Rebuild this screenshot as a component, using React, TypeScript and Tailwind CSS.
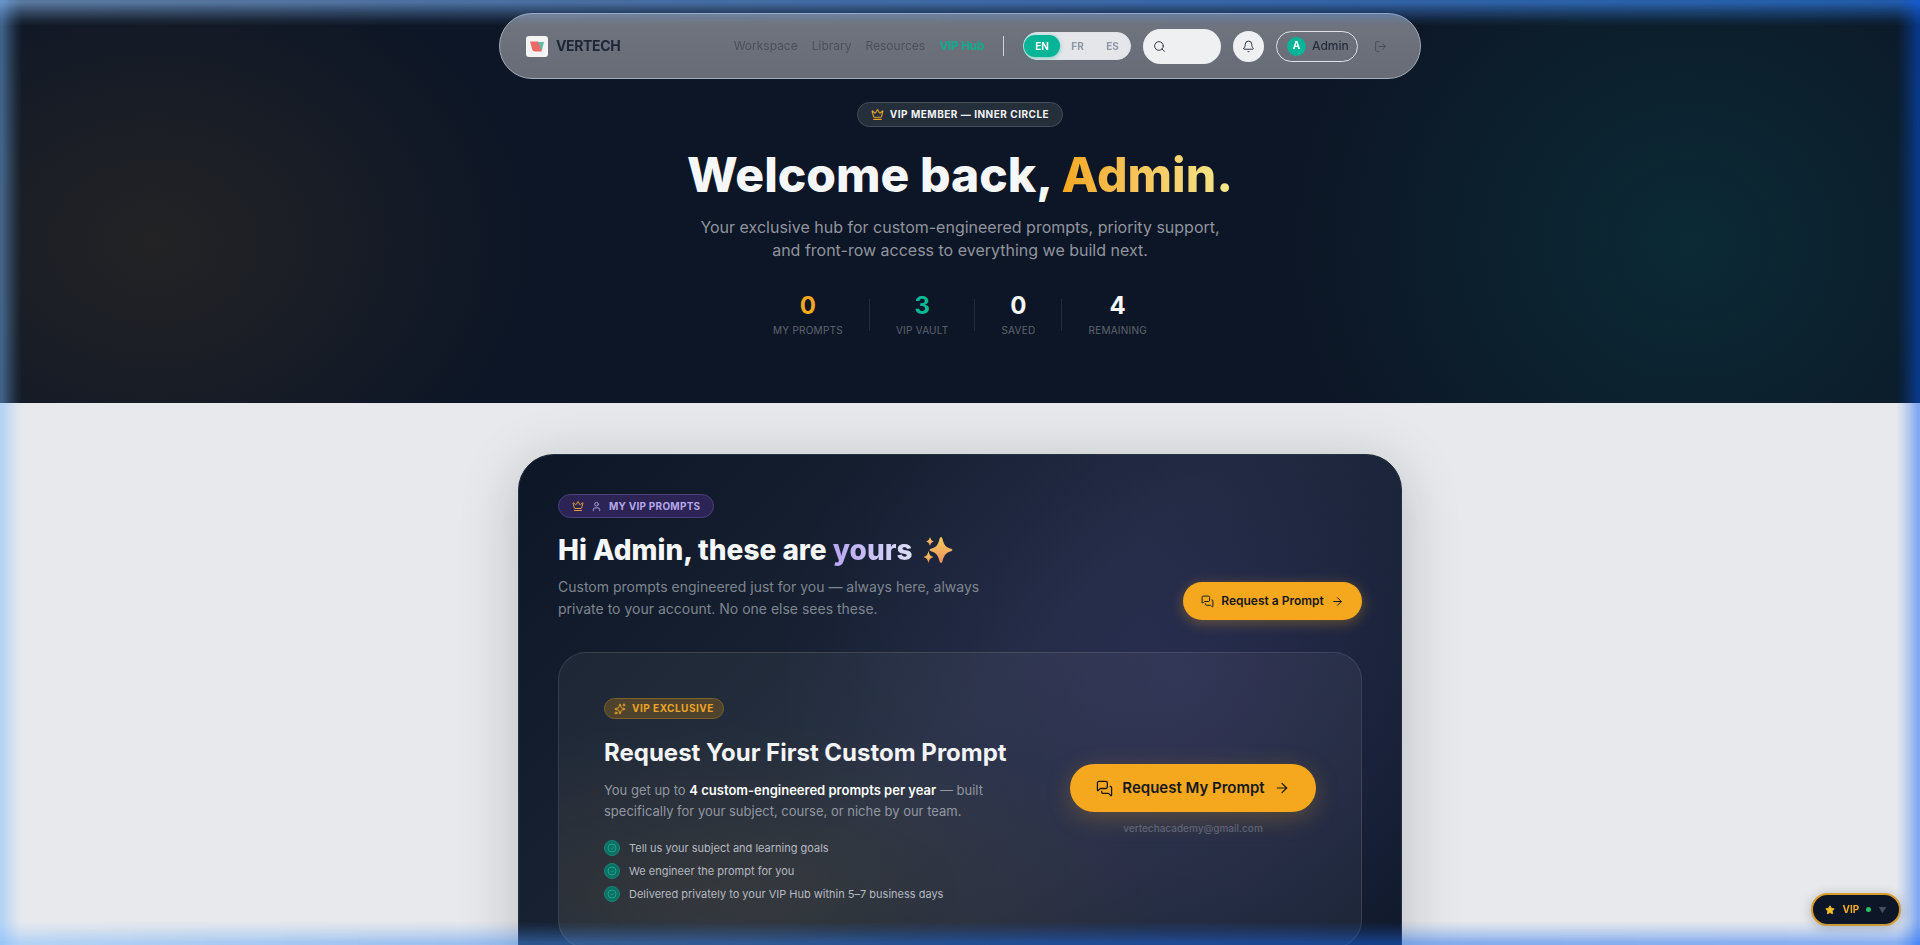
import React from 'react';
import { Crown, User, Search, Bell, LogOut, ArrowRight, MessagesSquare, Sparkles, Star } from 'lucide-react';

const navLinks = ['Workspace', 'Library', 'Resources'];
const languages = ['EN', 'FR', 'ES'];

const stats = [
    { value: 0, label: 'My Prompts', color: 'text-[#f5a81e]' },
    { value: 3, label: 'VIP Vault', color: 'text-[#06b795]' },
    { value: 0, label: 'Saved', color: 'text-[#f6f7f9]' },
    { value: 4, label: 'Remaining', color: 'text-[#f6f7f9]' },
];

const steps = [
    'Tell us your subject and learning goals',
    'We engineer the prompt for you',
    'Delivered privately to your VIP Hub within 5–7 business days',
];

const Logo: React.FC = () => (
    <svg width="22" height="21" viewBox="0 0 22 21" aria-hidden="true">
        <rect width="22" height="21" rx="3" fill="#f4f4f5" />
        <path d="M12 6h6l-2 8h-3z" fill="#5dbfa6" />
        <path d="M4 5.500h8l4 10H9q-2 0-2.800-2z" fill="#ee6a68" />
    </svg>
);

const StepIcon: React.FC = () => (
    <svg width="16" height="16" viewBox="0 0 16 16" fill="none" className="shrink-0" aria-hidden="true">
        <circle cx="8" cy="8" r="7.5" fill="#0e6f65" stroke="#12887a" />
        <circle cx="8" cy="8" r="4" stroke="#16a58d" />
        <path d="M6.7 8.1l1 .9 1.7-1.9" stroke="#16a58d" />
    </svg>
);

const SparkleMark: React.FC = () => (
    <svg width="30" height="28" viewBox="0 0 30 28" aria-hidden="true">
        <defs>
            <linearGradient id="sparkle" x1="0" y1="0" x2="0" y2="1">
                <stop offset="0" stopColor="#f5cf57" />
                <stop offset="1" stopColor="#f08f63" />
            </linearGradient>
        </defs>
        <g fill="url(#sparkle)">
            <path d="M18 1q1 0 1.5 2c1.500 6 3 8 8 9.500q2 .6 2 1.500t-2 1.500c-5 1.500-6.500 4-8 9.500q-.5 2-1.500 2t-1.500-2c-1.500-5.500-3-8-8-9.500q-2-.6-2-1.500t2-1.500c5-1.500 6.500-3.500 8-9.500q.5-2 1.500-2z" />
            <path d="M7 1c1 3 1.500 3.500 4 4.500-2.500 1-3 1.500-4 4.500-1-3-1.500-3.500-4-4.500 2.500-1 3-1.500 4-4.500z" />
            <path d="M5.500 15c1 4 2 5 5 6-3 1-4 2-5 6-1-4-2-5-5-6 3-1 4-2 5-6z" />
        </g>
    </svg>
);

const Header: React.FC = () => (
    <header className="fixed inset-x-0 top-[13px] z-20 mx-auto flex h-[66px] w-full max-w-[922px] items-center rounded-full border border-[#a3acba] bg-gradient-to-b from-[#70757f] to-[#676b76] pr-[30px] pl-[26px]">
        <a href="#home" className="flex items-center gap-2 text-sm font-bold tracking-tight text-[#1e2635]">
            <Logo />
            VERTECH
        </a>
        <nav className="ml-auto flex items-center gap-[14px] text-xs text-[#4b515c]">
            {navLinks.map(link => (
                <a key={link} href={`#${link.toLowerCase()}`}>{link}</a>
            ))}
            <a href="#vip" className="font-bold tracking-tight text-[#0fae90]">VIP Hub</a>
        </nav>
        <div className="mx-[19px] h-5 w-px bg-[#cdd1d8]" />
        <div className="flex h-7 w-[108px] items-center rounded-full border border-[#dfe3e8] bg-[#e4e6ea] text-[10px] font-bold text-[#8f97a5]">
            {languages.map((lang, index) => (
                <button
                    key={lang}
                    type="button"
                    className={index === 0
                        ? 'h-[22px] w-9 rounded-full bg-[#06b497] text-white shadow-[0_1px_4px_#06b49780]'
                        : 'h-[22px] flex-1'}
                >
                    {lang}
                </button>
            ))}
        </div>
        <label className="ml-3 flex h-[35px] w-[78px] items-center rounded-full bg-[#eef0f2] pl-[10px] text-[#2d3440]">
            <Search size={13} strokeWidth={1.8} className="shrink-0" />
            <input type="search" aria-label="Search" className="w-full min-w-0 bg-transparent px-2 text-xs outline-none" />
        </label>
        <button type="button" aria-label="Notifications" className="ml-3 flex size-[31px] items-center justify-center rounded-full bg-[#eef0f2] text-[#2d3440]">
            <Bell size={13} strokeWidth={1.8} />
        </button>
        <button type="button" className="ml-3 flex h-[31px] w-[82px] items-center gap-[6px] rounded-full border border-[#dfe3e8] pl-[10px] text-xs font-medium text-[#272e3c]">
            <span className="flex size-[19px] items-center justify-center rounded-full bg-[#06b497] text-[10px] font-bold text-white">A</span>
            Admin
        </button>
        <button type="button" aria-label="Log out" className="ml-3 flex size-5 items-center justify-center text-[#454c59]">
            <LogOut size={13} strokeWidth={1.8} />
        </button>
    </header>
);

const Hero: React.FC = () => (
    <section className="bg-[#0d1626] bg-[radial-gradient(ellipse_380px_300px_at_8%_60%,#232325,#23232500),radial-gradient(ellipse_400px_380px_at_88%_60%,#0b2a35,#0b2a3500)] pt-[102px] pb-[72px] text-center">
        <div className="flex flex-col items-center">
            <span className="flex h-[25px] items-center gap-[6px] rounded-full border border-[#454d5a] bg-[#252e3b] px-[13px] text-[10px] font-bold tracking-wider text-[#f1f3f6]">
                <Crown size={13} className="text-[#e5a02a]" />
                VIP MEMBER — INNER CIRCLE
            </span>
            <h1 className="mt-5 text-5xl leading-[56px] font-extrabold text-[#f6f7f9]">
                Welcome back, <span className="bg-gradient-to-r from-[#f5a81e] to-[#f3e88c] bg-clip-text text-transparent">Admin.</span>
            </h1>
            <p className="mt-[13px] w-[530px] max-w-full text-base leading-[23px] text-[#8f949e]">
                Your exclusive hub for custom-engineered prompts, priority support, and front-row access to everything we build next.
            </p>
            <dl className="mt-[37px] flex items-center divide-x divide-[#232b39]">
                {stats.map(stat => (
                    <div key={stat.label} className="flex h-8 flex-col-reverse items-center justify-center px-[26px]">
                        <dt className="mt-[2px] text-[10px] leading-4 tracking-wide text-[#5e6470] uppercase">{stat.label}</dt>
                        <dd className={`text-2xl leading-7 font-bold ${stat.color}`}>{stat.value}</dd>
                    </div>
                ))}
            </dl>
        </div>
    </section>
);

const RequestCard: React.FC = () => (
    <div className="mt-8 flex items-center justify-between rounded-[28px] border border-white/10 bg-white/5 bg-[radial-gradient(ellipse_at_20%_80%,#f5a81e14,transparent_50%)] p-[45px]">
        <div className="w-[410px]">
            <span className="flex h-[21px] w-fit items-center gap-[6px] rounded-full border border-[#7d6129] bg-[#4f432d] px-[9px] text-[10px] font-bold tracking-wider text-[#eca424]">
                <Sparkles size={12} />
                VIP EXCLUSIVE
            </span>
            <h3 className="mt-[18px] text-2xl leading-8 font-bold whitespace-nowrap text-[#f3f4f7]">Request Your First Custom Prompt</h3>
            <p className="mt-[11px] text-[13px] leading-[21px] text-[#9297a1]">
                You get up to <strong className="font-semibold text-white">4 custom-engineered prompts per year</strong> — built
                <br />
                specifically for your subject, course, or niche by our team.
            </p>
            <ul className="mt-[18px] flex flex-col gap-[7px] text-[11px] leading-4 text-[#b5b9c1]">
                {steps.map(step => (
                    <li key={step} className="flex items-center gap-[9px]">
                        <StepIcon />
                        {step}
                    </li>
                ))}
            </ul>
        </div>
        <div className="flex flex-col items-center">
            <button type="button" className="flex h-12 w-[246px] items-center justify-center gap-[9px] rounded-full bg-[#f5a81e] text-[15px] font-semibold text-[#14171c] shadow-[0_6px_24px_#f5a81e40]">
                <MessagesSquare size={17} strokeWidth={1.8} />
                Request My Prompt
                <ArrowRight size={16} strokeWidth={1.8} />
            </button>
            <a href="mailto:vertechacademy@gmail.com" className="mt-2 text-[10px] leading-4 font-medium text-[#5f6375]">vertechacademy@gmail.com</a>
        </div>
    </div>
);

const VipPrompts: React.FC = () => (
    <section className="mx-auto w-full max-w-[884px] rounded-[36px] border border-[#263040] bg-[#0d1626] bg-[radial-gradient(circle_at_75%_42%,#8b6cf624_0,#8b6cf600_400px),linear-gradient(135deg,#0d1626,#1b2637_50%,#0d1626)] p-[39px] shadow-[0_10px_60px_#00000033]">
        <div className="flex items-end justify-between">
            <div>
                <span className="flex h-6 w-fit items-center gap-[7px] rounded-full border border-[#4b3f7c] bg-[#2b2455] px-[13px] text-[10px] font-bold tracking-wide text-[#b6a7ec]">
                    <Crown size={12} className="text-[#dd9a35]" />
                    <User size={11} />
                    MY VIP PROMPTS
                </span>
                <h2 className="mt-[14px] flex items-center gap-[10px] text-[28px] leading-9 font-extrabold text-[#f6f7f9]">
                    <span>Hi Admin, these are <span className="bg-gradient-to-r from-[#b9a5f3] to-[#dcdff6] bg-clip-text text-transparent">yours</span></span>
                    <SparkleMark />
                </h2>
                <p className="mt-2 w-[440px] text-sm leading-[22px] text-[#7e858f]">
                    Custom prompts engineered just for you — always here, always private to your account. No one else sees these.
                </p>
            </div>
            <button type="button" className="flex h-[38px] w-[179px] items-center justify-center gap-[7px] rounded-full bg-[#f5a81e] text-xs font-semibold text-[#14171c] shadow-[0_3px_14px_#f5a81e55]">
                <MessagesSquare size={13} strokeWidth={1.8} />
                Request a Prompt
                <ArrowRight size={13} strokeWidth={1.8} />
            </button>
        </div>
        <RequestCard />
    </section>
);

// Blue glow that runs round the window edge, paler on the left
const EdgeGlow: React.FC = () => (
    <div className="pointer-events-none fixed inset-0 z-30" aria-hidden="true">
        <div className="absolute inset-x-0 top-0 h-[26px] bg-gradient-to-r from-[#96c6ff]/55 to-[#2f86ff]/60 [mask-image:linear-gradient(to_bottom,#000_10%,#0009_40%,#0003_75%,transparent)]" />
        <div className="absolute inset-x-0 bottom-0 h-[24px] bg-gradient-to-r from-[#78b9ff]/45 via-[#1c6be4]/50 to-[#176bf8]/45 [mask-image:linear-gradient(to_top,#000_10%,#0009_40%,#0003_75%,transparent)]" />
        <div className="absolute inset-y-0 left-0 w-[22px] bg-[#78b9ff]/45 [mask-image:linear-gradient(to_right,#000_10%,#0009_40%,#0003_75%,transparent)]" />
        <div className="absolute inset-y-0 right-0 w-[24px] bg-[#075bf3]/45 [mask-image:linear-gradient(to_left,#000_10%,#0009_40%,#0003_75%,transparent)]" />
    </div>
);

export default function App() {
    return (
        <div className="h-screen overflow-hidden bg-[#e7e9ec] font-['Inter',sans-serif]">
            <Header />
            <Hero />
            <main className="pt-[51px] pb-16">
                <VipPrompts />
            </main>
            <button type="button" className="fixed right-[19px] bottom-[19px] z-20 flex h-[33px] w-[90px] items-center justify-center gap-[7px] rounded-full border-2 border-[#d99c2b] bg-[#0d1626] text-[10px] font-bold text-[#f0a925] shadow-[0_2px_12px_#0d162640]">
                <Star size={10} className="fill-[#f5c02e] text-[#f5c02e]" />
                VIP
                <span className="size-[5px] rounded-full bg-[#25c064]" />
                <span className="text-[8px] text-[#454e5c]">▼</span>
            </button>
            <EdgeGlow />
        </div>
    );
}
